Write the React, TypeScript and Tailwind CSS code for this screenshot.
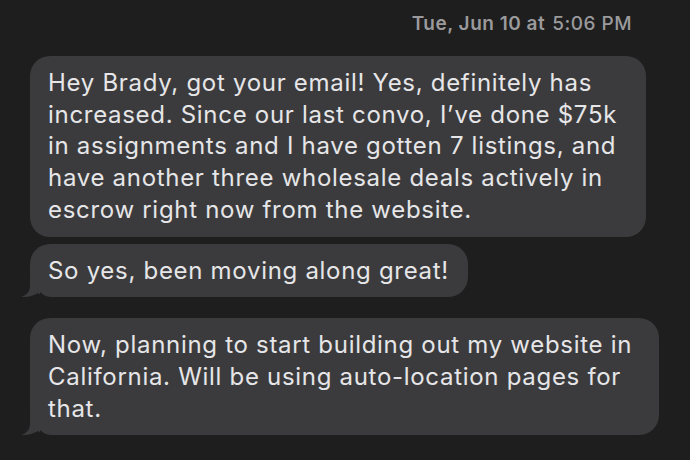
const font = { fontFamily: 'Inter, "Noto Sans", sans-serif' }

function Tail() {
  return (
    <svg
      className="absolute bottom-0 left-[-9px]"
      width="30"
      height="18"
      viewBox="0 0 30 18"
    >
      <path d="M9 0 L9 7 C9 12 6 16 0 18 C8 18.5 14 16 19 13 C22 16 26 18 30 18 L30 0 Z" fill="#3b3b3d" />
      <path d="M19 13 C22 16 26 18 30 18 L19 18 Z" fill="#1e1e1e" />
    </svg>
  )
}

function Bubble({ lines, width, tail }: { lines: string[]; width: string; tail?: boolean }) {
  return (
    <div className={`relative ${width} rounded-[20px] bg-[#3b3b3d] px-[18px] py-[11px]`}>
      {lines.map((l) => (
        <div key={l} className="whitespace-nowrap text-[24px] leading-[31.7px] tracking-[0.7px] text-[#e6e6e8]">
          {l}
        </div>
      ))}
      {tail && <Tail />}
    </div>
  )
}

export default function App() {
  return (
    <div className="h-[460px] w-[690px] overflow-hidden bg-[#1e1e1e]" style={font}>
      <div className="flex justify-end pr-[58px] pt-[10px] text-[19px] leading-[27px] tracking-[0.5px] text-[#9a9a9c]">
        <span className="font-semibold">Tue, Jun 10 at</span>
        <span className="ml-[7px] font-medium">5:06 PM</span>
      </div>
      <div className="flex flex-col items-start pl-[30px] pt-[19px]">
        <Bubble
          width="w-[616px]"
          lines={[
            'Hey Brady, got your email! Yes, definitely has',
            'increased. Since our last convo, I’ve done $75k',
            'in assignments and I have gotten 7 listings, and',
            'have another three wholesale deals actively in',
            'escrow right now from the website.',
          ]}
        />
        <div className="mt-[7px]">
          <Bubble width="w-[438px]" tail lines={['So yes, been moving along great!']} />
        </div>
        <div className="mt-[21px]">
          <Bubble
            width="w-[629px]"
            tail
            lines={[
              'Now, planning to start building out my website in',
              'California. Will be using auto-location pages for',
              'that.',
            ]}
          />
        </div>
      </div>
    </div>
  )
}
